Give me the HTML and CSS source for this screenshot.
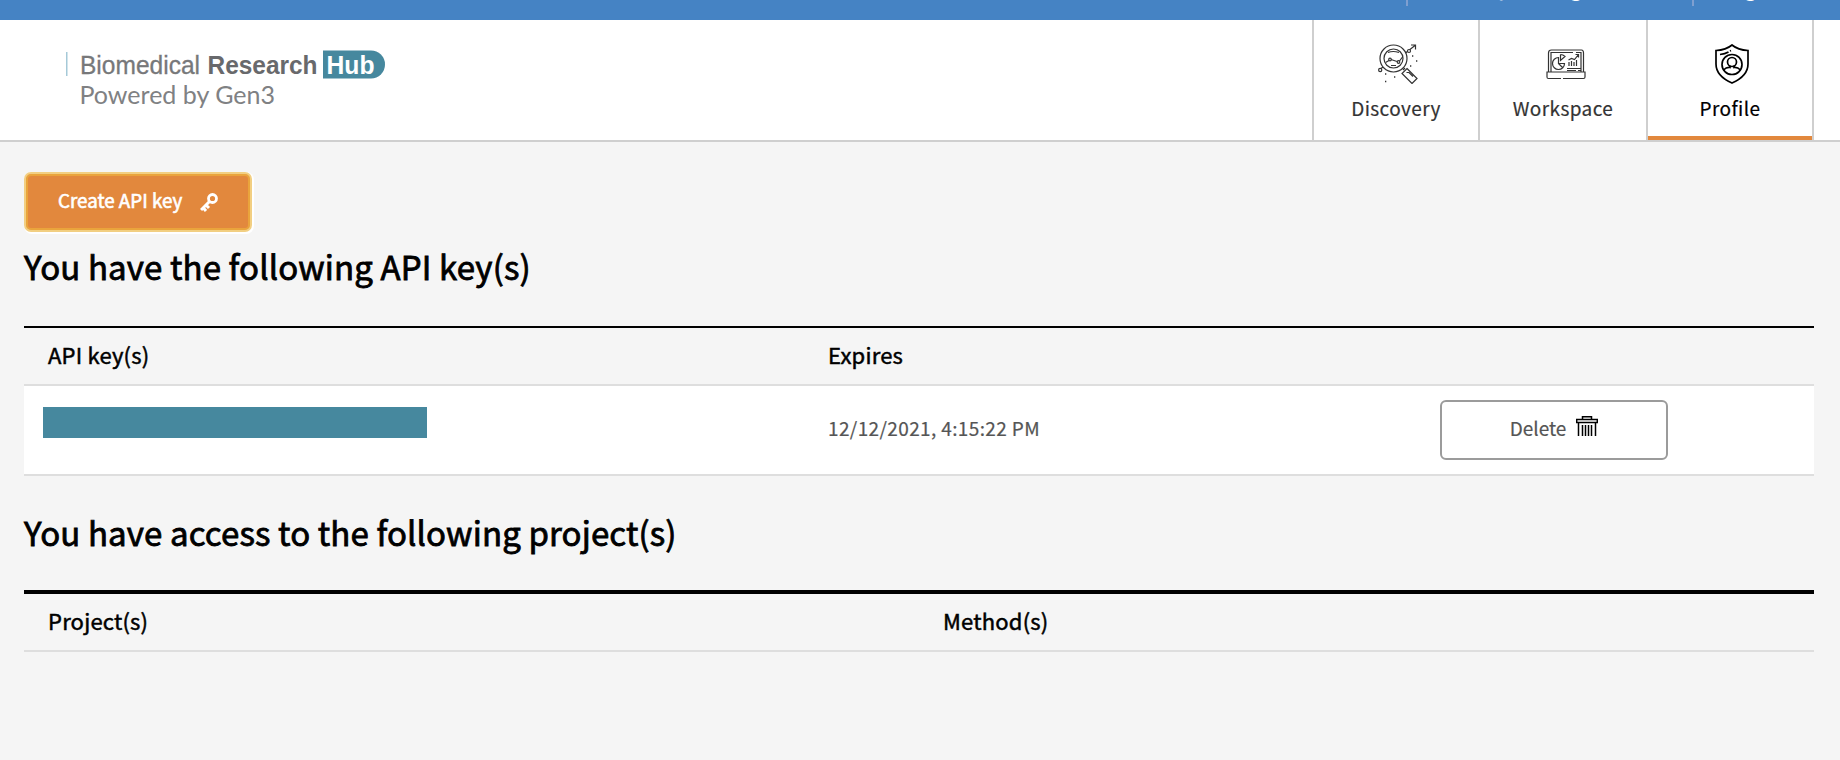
FILE: index.html
```html
<!DOCTYPE html>
<html lang="en">
<head>
<meta charset="utf-8">
<title>Profile</title>
<link rel="stylesheet" href="styles.css">
</head>
<body>
<div class="top-bar">
  <div class="top-item user"><span>user@uchicago.edu</span></div>
  <div class="top-item logout"><span>Logout</span></div>
</div>
<header class="nav">
  <svg class="logo" width="330" height="64" viewBox="0 0 330 64">
    <rect x="0" y="5" width="1.5" height="24" fill="#a5c9d8"/>
    <text class="logo-regular" x="14" y="27" textLength="120" lengthAdjust="spacingAndGlyphs">Biomedical</text>
    <text class="logo-bold" x="141.5" y="27" textLength="110" lengthAdjust="spacingAndGlyphs">Research</text>
    <path d="M257 3.5h48a14 14 0 0 1 0 28h-48z" fill="#46889e"/>
    <text class="logo-bold logo-hub" x="260.5" y="27" textLength="48" lengthAdjust="spacingAndGlyphs">Hub</text>
    <text class="logo-powered" x="13.5" y="57" textLength="195.5" lengthAdjust="spacingAndGlyphs">Powered by Gen3</text>
  </svg>
  <nav class="nav-items">
    <a class="nav-item">
      <svg width="40" height="40" viewBox="0 0 40 40" fill="none" stroke="#333" stroke-width="1.2">
        <circle cx="15.5" cy="14.5" r="13.5"/><circle cx="15.5" cy="14.5" r="9.5"/>
        <path d="M3 24.5L5 23M7.500 18.500L11 16.500M13 15.500l6 2M21.500 17l3-4M27.500 9l9.500-7.500M33 1h4.500v4.500"/>
        <circle cx="12" cy="15.5" r="1.300"/><circle cx="20.500" cy="18" r="1.300"/><circle cx="31" cy="7" r="1.500" fill="#fff"/><circle cx="2.200" cy="26" r="1.600" fill="#fff"/>
        <path d="M10 8.500q5-2 11 0M13 21.500h5M25 26l2-2M29 24.500l10 10-5 5-10-10zM28.500 28.500h2.500l4 4"/>
        <path d="M34 12h1.300M38 17h1.300M32 22h1.300M7 30h1.300M16 33h1.300M7 37.500h1.300" stroke-width="1.500"/>
      </svg>
      <span>Discovery</span>
    </a>
    <a class="nav-item">
      <svg width="40" height="40" viewBox="0 0 40 40" fill="none" stroke="#333" stroke-width="1.2">
        <path d="M2.500 28V9q0-3 3-3h30q2 0 2 3v19M5 28V8.500h22M30 8.500h5V28M15 34.500H2.500q-1.500 0-1.500-1.500v-5h38v5q0 1.500-1.500 1.500H17"/>
        <path d="M12.500 13.500a6 6 0 1 0 6 6h-6zM12.500 19.500l4 4M14.500 10.500v6l4.500-4q-2-2-4.500-2"/>
        <path d="M23 22v-4M25.500 22v-5M28 22v-4M30.500 22v-6M22.500 16l3-1.500 3 1 4-5M29.500 10.500h3v3M21 24.500h14M21 26.500h9M32 26.500h3"/>
      </svg>
      <span>Workspace</span>
    </a>
    <a class="nav-item active">
      <svg width="40" height="40" viewBox="0 0 40 40" fill="none" stroke="#000" stroke-width="1.700">
        <path d="M20 1q6 5 16 5.500V20q0 12-16 19Q4 32 4 20V6.500Q14 6 20 1z"/>
        <circle cx="20" cy="20.500" r="10"/>
        <circle cx="20" cy="18" r="4.500"/>
        <path d="M11.500 26q3-3 6.500-2.500v-2M28.500 26q-3-3-6.500-2.500v-2M8 10.500q5-.5 8.500-2.500M18 7l1-.5"/>
      </svg>
      <span>Profile</span>
    </a>
  </nav>
</header>
<main class="content">
  <button class="create">Create API key
    <svg width="18" height="19" viewBox="0 0 18 19" fill="none" stroke="#fff">
      <circle cx="12.500" cy="5.500" r="4" stroke-width="2.800"/>
      <path d="M9.500 8.500L1 17M3 14.500l3 3.500M6 12l3 3" stroke-width="3"/>
    </svg>
  </button>
  <h2 class="title">You have the following API key(s)</h2>
  <section class="table keys">
    <div class="row head"><div>API key(s)</div><div>Expires</div><div></div></div>
    <div class="row data">
      <div class="masked"></div>
      <div class="date">12/12/2021, 4:15:22 PM</div>
      <div><button class="delete"><span>Delete</span>
        <svg width="22" height="20" viewBox="0 0 22 20" fill="none" stroke="#000" stroke-width="1.500">
          <path d="M6.500 3V.7h9V3M.7 3.500h20.600v3H.7zM2.500 7v13M19.500 7v13M6.500 9v11M9.500 9v11M12.500 9v11M15.500 9v11"/>
        </svg></button></div>
    </div>
  </section>
  <h2 class="title second">You have access to the following project(s)</h2>
  <section class="table projects">
    <div class="row head"><div>Project(s)</div><div>Method(s)</div></div>
  </section>
</main>
</body>
</html>
```
FILE: styles.css
```css
* { box-sizing: border-box; }
body {
  margin: 0;
  background: #f5f5f5;
  color: #000;
  font-family: "Noto Sans CJK SC", "Noto Sans", sans-serif;
}
.top-bar {
  height: 20px;
  background: #4583c4;
  display: flex;
  justify-content: flex-end;
  align-items: flex-start;
  overflow: hidden;
  color: #fff;
  font-size: 18.5px;
  font-weight: 500;
  letter-spacing: .3px;
}
.top-item {
  height: 6px;
  flex: none;
  display: flex;
  align-items: flex-end;
  line-height: 26px;
  border-left: 2px solid #7f9fd0;
}
.top-item span { margin-bottom: 4px; }
.user { width: 286px; padding-left: 45px; }
.logout { width: 148px; padding-left: 29px; }
.nav {
  height: 122px;
  background: #fff;
  border-bottom: 2px solid #cfcfcf;
  display: flex;
  justify-content: space-between;
  padding: 0 26px 0 66px;
}
.logo { margin-top: 27px; }
.logo-regular, .logo-bold {
  font-family: "Liberation Sans", sans-serif;
  font-size: 25.5px;
  fill: #77787a;
}
.logo-regular { stroke: #77787a; stroke-width: .3px; }
.logo-bold { font-weight: 700; fill: #68696c; }
.logo-hub { fill: #fff; }
.logo-powered { font: 400 24.5px "Lato", sans-serif; fill: #808183; }
.nav-items { display: flex; border-right: 2px solid #cfcfcf; }
.nav-item {
  width: 166px;
  height: 120px;
  border-left: 2px solid #cfcfcf;
  display: flex;
  flex-direction: column;
  align-items: center;
  padding-top: 24px;
  color: #333;
  font-size: 19px;
  line-height: 28px;
  letter-spacing: .4px;
  -webkit-text-stroke: .2px currentColor;
}
.nav-item:nth-child(2) { width: 168px; }
.nav-item span { margin-top: 10px; }
.nav-item svg { margin-left: 4px; flex: none; }
.nav-item:nth-child(2) svg { margin-left: 6px; }
.nav-item.active {
  color: #000;
  position: relative;
}
.nav-item.active::after {
  content: "";
  position: absolute;
  left: 0; right: 0; bottom: 0;
  height: 4px;
  background: #e2883d;
}
.content { padding: 30px 26px 0 24px; }
button { font-family: inherit; }
.create {
  display: flex;
  align-items: center;
  width: 228px;
  height: 60px;
  padding: 0 0 5px 32px;
  border: 2px solid #f2cf82;
  border-radius: 7px;
  background: #e2883d;
  box-shadow: inset 0 0 0 2px #eaa43c, 1px 1px 0 1px #fff;
  color: #fff;
  font-size: 18.8px;
  -webkit-text-stroke: .6px #fff;
  gap: 18px;
}
.create svg { margin-top: 5px; }
.title {
  margin: 10px 0 0;
  height: 84px;
  font-size: 33px;
  line-height: 48px;
  font-weight: 400;
  letter-spacing: .13px;
  -webkit-text-stroke: .8px #000;
}
.table { border-top: 2px solid #000; }
.row { display: grid; align-items: center; border-bottom: 2px solid #dedede; }
.keys .row { grid-template-columns: 804px 612px 1fr; }
.projects .row { grid-template-columns: 919px 1fr; }
.head {
  height: 58px;
  padding-bottom: 5px;
  font-size: 22px;
  letter-spacing: .2px;
  -webkit-text-stroke: .5px #000;
}
.head div:first-child { padding-left: 24px; }
.data { height: 90px; background: #fff; color: #555; font-size: 19px; }
.date { letter-spacing: .37px; margin-top: -6px; -webkit-text-stroke: .2px #555; }
.masked {
  width: 384px;
  height: 31px;
  margin: -15px 0 0 19px;
  background: #46889e;
}
.delete {
  width: 228px;
  height: 60px;
  display: flex;
  align-items: center;
  justify-content: center;
  gap: 10px;
  border: 2px solid #9b9b9b;
  border-radius: 6px;
  background: #fff;
  color: #555;
  font-size: 19px;
}
.delete span { margin-top: -6px; -webkit-text-stroke: .2px #555; }
.delete svg { margin-top: -8px; }
.title.second { margin-top: 32px; height: 82px; }
.projects { border-top-width: 4px; }
```
